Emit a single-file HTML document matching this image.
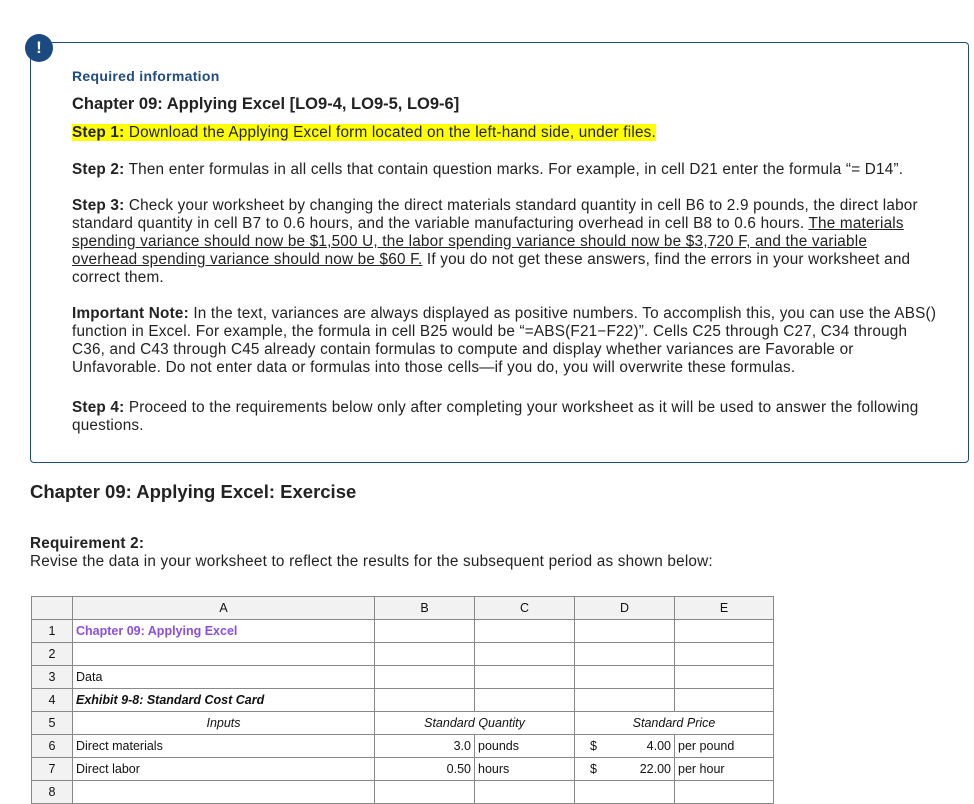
<!DOCTYPE html>
<html><head><meta charset="utf-8"><style>
body{margin:0;background:#fff;font-family:"Liberation Sans",sans-serif;color:#222;width:974px;height:784px;overflow:hidden;position:relative}
.box{position:absolute;left:30px;top:42px;width:937px;height:419px;border:1px solid #1f4b80;border-radius:4px}
.icon{position:absolute;left:25px;top:34px;width:28px;height:28px;border-radius:50%;background:#1b4a80;color:#fff;font-weight:bold;font-size:17px;text-align:center;line-height:28px}
.t{position:absolute;left:72px;white-space:nowrap;font-size:15.3px;letter-spacing:0.2px;line-height:18px}
u{text-decoration:underline}
table{position:absolute;left:31px;top:596px;border-collapse:collapse;font-size:12.5px;font-family:"Liberation Sans",sans-serif}
td{border:1px solid #888;height:22px;padding:0 3px;color:#111;white-space:nowrap}
td.h{background:#f2f2f2;text-align:center}
td.n{background:#f2f2f2;text-align:center}
</style></head><body>
<div class="box"></div>
<div class="icon">!</div>
<div class="t" style="top:67px;color:#1f4b80;font-weight:bold;font-size:14px;letter-spacing:0.3px">Required information</div>
<div class="t" style="top:95px;font-weight:bold;font-size:16.5px;letter-spacing:0">Chapter 09: Applying Excel [LO9-4, LO9-5, LO9-6]</div>
<div class="t" style="top:124px"><span style="background:#ffff00"><b>Step 1:</b> Download the Applying Excel form located on the left-hand side, under files.</span></div>
<div class="t" style="top:161px"><b>Step 2:</b> Then enter formulas in all cells that contain question marks. For example, in cell D21 enter the formula “= D14”.</div>
<div class="t" style="top:197px"><b>Step 3:</b> Check your worksheet by changing the direct materials standard quantity in cell B6 to 2.9 pounds, the direct labor<br>standard quantity in cell B7 to 0.6 hours, and the variable manufacturing overhead in cell B8 to 0.6 hours. <u>The materials</u><br><u>spending variance should now be $1,500 U, the labor spending variance should now be $3,720 F, and the variable</u><br><u>overhead spending variance should now be $60 F.</u> If you do not get these answers, find the errors in your worksheet and<br>correct them.</div>
<div class="t" style="top:305px"><b>Important Note:</b> In the text, variances are always displayed as positive numbers. To accomplish this, you can use the ABS()<br>function in Excel. For example, the formula in cell B25 would be “=ABS(F21−F22)”. Cells C25 through C27, C34 through<br>C36, and C43 through C45 already contain formulas to compute and display whether variances are Favorable or<br>Unfavorable. Do not enter data or formulas into those cells—if you do, you will overwrite these formulas.</div>
<div class="t" style="top:399px"><b>Step 4:</b> Proceed to the requirements below only after completing your worksheet as it will be used to answer the following<br>questions.</div>
<div class="t" style="left:30px;top:483px;font-weight:bold;font-size:18.5px;letter-spacing:0">Chapter 09: Applying Excel: Exercise</div>
<div class="t" style="left:30px;top:535px"><b>Requirement 2:</b><br>Revise the data in your worksheet to reflect the results for the subsequent period as shown below:</div>
<table>
<tr><td class="h" style="width:34px"></td><td class="h" style="width:295px">A</td><td class="h" style="width:93px">B</td><td class="h" style="width:93px">C</td><td class="h" style="width:93px">D</td><td class="h" style="width:92px">E</td></tr>
<tr><td class="n">1</td><td style="color:#8a4fe0;font-weight:bold">Chapter 09: Applying Excel</td><td></td><td></td><td></td><td></td></tr>
<tr><td class="n">2</td><td></td><td></td><td></td><td></td><td></td></tr>
<tr><td class="n">3</td><td>Data</td><td></td><td></td><td></td><td></td></tr>
<tr><td class="n">4</td><td style="font-weight:bold;font-style:italic">Exhibit 9-8: Standard Cost Card</td><td></td><td></td><td></td><td></td></tr>
<tr><td class="n">5</td><td style="text-align:center;font-style:italic">Inputs</td><td colspan="2" style="text-align:center;font-style:italic">Standard Quantity</td><td colspan="2" style="text-align:center;font-style:italic">Standard Price</td></tr>
<tr><td class="n">6</td><td>Direct materials</td><td style="text-align:right">3.0</td><td>pounds</td><td><span style="margin-left:12px">$</span><span style="float:right">4.00</span></td><td>per pound</td></tr>
<tr><td class="n">7</td><td>Direct labor</td><td style="text-align:right">0.50</td><td>hours</td><td><span style="margin-left:12px">$</span><span style="float:right">22.00</span></td><td>per hour</td></tr>
<tr><td class="n">8</td><td></td><td></td><td></td><td></td><td></td></tr>
</table>
</body></html>
